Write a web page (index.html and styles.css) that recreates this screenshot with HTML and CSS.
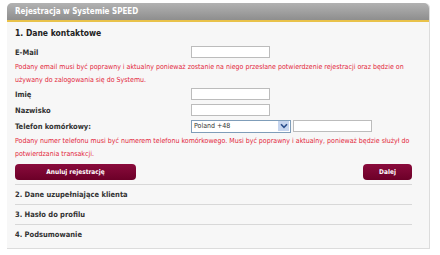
FILE: index.html
```html
<!DOCTYPE html>
<html lang="pl">
<head>
    <meta charset="UTF-8">
    <title>Rejestracja w Systemie SPEED</title>
    <link rel="stylesheet" href="styles.css">
</head>
<body>
    <div class="panel">
        <div class="panel-head">Rejestracja w Systemie SPEED</div>
        <div class="panel-body">
            <h2 class="step">1. Dane kontaktowe</h2>

            <div class="row">
                <label class="lbl">E-Mail</label>
                <input class="txt" type="text">
            </div>
            <p class="hint">Podany email musi być poprawny i aktualny ponieważ zostanie na niego przesłane potwierdzenie rejestracji oraz będzie on używany do zalogowania się do Systemu.</p>

            <div class="row">
                <label class="lbl">Imię</label>
                <input class="txt" type="text">
            </div>
            <div class="row">
                <label class="lbl">Nazwisko</label>
                <input class="txt" type="text">
            </div>
            <div class="row">
                <label class="lbl">Telefon komórkowy:</label>
                <div class="sel">
                    <span>Poland +48</span>
                    <span class="arrow">
                        <svg width="8" height="6" viewBox="0 0 8 6"><path d="M1 1.2 L4 4.4 L7 1.2" fill="none" stroke="#2c4f8c" stroke-width="1.6"/></svg>
                    </span>
                </div>
                <input class="txt" type="text">
            </div>
            <p class="hint">Podany numer telefonu musi być numerem telefonu komórkowego. Musi być poprawny i aktualny, ponieważ będzie służył do potwierdzania transakcji.</p>

            <div class="actions">
                <button class="btn wide">Anuluj rejestrację</button>
                <button class="btn">Dalej</button>
            </div>

            <div class="step-line">2. Dane uzupełniające klienta</div>
            <div class="step-line">3. Hasło do profilu</div>
            <div class="step-line">4. Podsumowanie</div>
        </div>
    </div>
</body>
</html>
```

FILE: styles.css
```css
body {
    margin: 0;
    background: #ffffff;
    font-family: "DejaVu Sans Condensed", "DejaVu Sans", sans-serif;
}

.panel {
    width: 422px;
    margin: 3px 0 0 7px;
    border-radius: 5px 5px 0 0;
    background: #f7f7f7;
    border-right: 1px solid #dcdcdc;
    border-bottom: 1px solid #dcdcdc;
}

.panel-head {
    height: 17px;
    line-height: 17px;
    padding-left: 8px;
    border-radius: 5px 5px 0 0;
    background: linear-gradient(#b2b2b2, #8e8e8e);
    border-bottom: 2px solid #e9c24a;
    color: #ffffff;
    font-size: 8px;
    font-weight: bold;
}

.panel-body {
    padding: 3px 17px 4px 8px;
}

.step {
    margin: 0 0 3px;
    font-size: 8.5px;
    font-weight: bold;
    color: #222;
    line-height: 16px;
}

.row {
    display: flex;
    align-items: center;
    height: 16px;
}

.lbl {
    width: 176px;
    font-size: 7.5px;
    font-weight: bold;
    color: #333;
}

.txt {
    box-sizing: border-box;
    width: 79px;
    height: 12px;
    margin: 0;
    padding: 0;
    border: 1px solid #bcbcbc;
    background: #fff;
}

.sel {
    box-sizing: border-box;
    display: flex;
    align-items: center;
    justify-content: space-between;
    width: 100px;
    height: 13px;
    margin-right: 2px;
    padding: 0 1px 0 2px;
    border: 1px solid #7f9db9;
    background: #fff;
    font-size: 7px;
    color: #333;
}

.arrow {
    width: 11px;
    height: 10px;
    background: #c6d5ef;
    display: flex;
    align-items: center;
    justify-content: center;
}

.hint {
    margin: 1px 0 0;
    font-size: 7px;
    line-height: 12.5px;
    color: #e3253a;
}

.actions {
    display: flex;
    justify-content: space-between;
    margin-top: 4px;
    padding-bottom: 4px;
    border-bottom: 1px solid #d8d8d8;
}

.btn {
    height: 16px;
    width: 49px;
    padding: 0;
    border: none;
    border-radius: 4px;
    background: linear-gradient(#8a0b3c, #6c0028);
    color: #fff;
    font-family: "DejaVu Sans Condensed", "DejaVu Sans", sans-serif;
    font-size: 6.5px;
    font-weight: bold;
}

.btn.wide {
    width: 121px;
}

.step-line {
    height: 19px;
    line-height: 19px;
    font-size: 7.5px;
    font-weight: bold;
    color: #333;
    border-bottom: 1px solid #d8d8d8;
}

.step-line:last-child {
    border-bottom: none;
}
```
